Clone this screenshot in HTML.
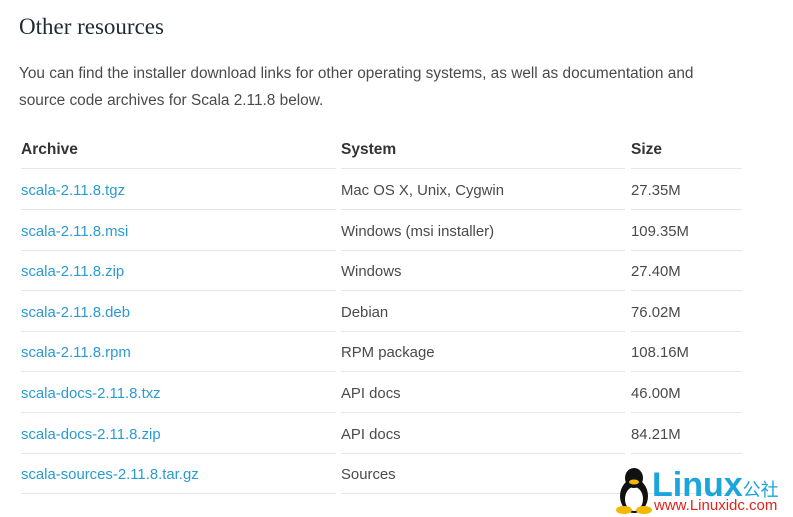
<!DOCTYPE html>
<html><head><style>
body{margin:0;background:#fff;width:793px;height:517px;overflow:hidden;font-family:"Liberation Sans",sans-serif;position:relative}
h2{position:absolute;left:19px;top:14px;margin:0;font-family:"Liberation Serif",serif;font-weight:normal;font-size:23px;color:#1e2b33}
p{position:absolute;left:19px;top:61px;margin:0;font-size:15.4px;line-height:26.5px;color:#4a4a4a;width:700px}
.c{position:absolute;font-size:14.9px;color:#4a4a4a}
.h{font-weight:bold;color:#333;font-size:15.5px}
a{color:#2a9bd1;text-decoration:none}
.ln{position:absolute;height:1px;background:#e4e8e8}
</style></head><body>
<h2>Other resources</h2>
<p>You can find the installer download links for other operating systems, as well as documentation and source code archives for Scala 2.11.8 below.</p>
<div class="c h" style="left:21px;top:141px">Archive</div>
<div class="c h" style="left:341px;top:141px">System</div>
<div class="c h" style="left:631px;top:141px">Size</div>
<div class="ln" style="left:21px;width:315px;top:168px"></div><div class="ln" style="left:341px;width:284px;top:168px"></div><div class="ln" style="left:631px;width:111px;top:168px"></div>
<div id="rows"></div>
<script>
var d=[["scala-2.11.8.tgz","Mac OS X, Unix, Cygwin","27.35M"],["scala-2.11.8.msi","Windows (msi installer)","109.35M"],["scala-2.11.8.zip","Windows","27.40M"],["scala-2.11.8.deb","Debian","76.02M"],["scala-2.11.8.rpm","RPM package","108.16M"],["scala-docs-2.11.8.txz","API docs","46.00M"],["scala-docs-2.11.8.zip","API docs","84.21M"],["scala-sources-2.11.8.tar.gz","Sources",""]];
var h="";d.forEach(function(r,i){var t=183+i*40.6,l=209+i*40.6;
h+='<div class="c" style="left:21px;top:'+t+'px"><a>'+r[0]+'</a></div><div class="c" style="left:341px;top:'+t+'px">'+r[1]+'</div><div class="c" style="left:631px;top:'+t+'px">'+r[2]+'</div>';
h+='<div class="ln" style="left:21px;width:315px;top:'+l+'px"></div><div class="ln" style="left:341px;width:284px;top:'+l+'px"></div><div class="ln" style="left:631px;width:111px;top:'+l+'px"></div>';});
document.getElementById("rows").innerHTML=h;
</script>
<svg style="position:absolute;left:614px;top:466px" width="40" height="48" viewBox="0 0 40 48">
<ellipse cx="20" cy="30" rx="14" ry="17" fill="#111"/><ellipse cx="20" cy="33" rx="9" ry="12" fill="#fff"/>
<ellipse cx="20" cy="12" rx="9" ry="10" fill="#111"/><ellipse cx="20" cy="16" rx="5" ry="2.5" fill="#f5b800"/>
<ellipse cx="10" cy="44" rx="8" ry="4" fill="#f5b800"/><ellipse cx="30" cy="44" rx="8" ry="4" fill="#f5b800"/>
</svg>
<div style="position:absolute;left:652px;top:468px;font:bold 34px 'Liberation Sans',sans-serif;color:#1aa5dc;line-height:34px">Linux<span style="font:18px 'Noto Sans CJK SC',sans-serif;color:#1aa5dc">公社</span></div>
<div style="position:absolute;left:654px;top:497px;font:15px 'Liberation Sans',sans-serif;color:#e2231a">www.Linuxidc.com</div>
</body></html>
